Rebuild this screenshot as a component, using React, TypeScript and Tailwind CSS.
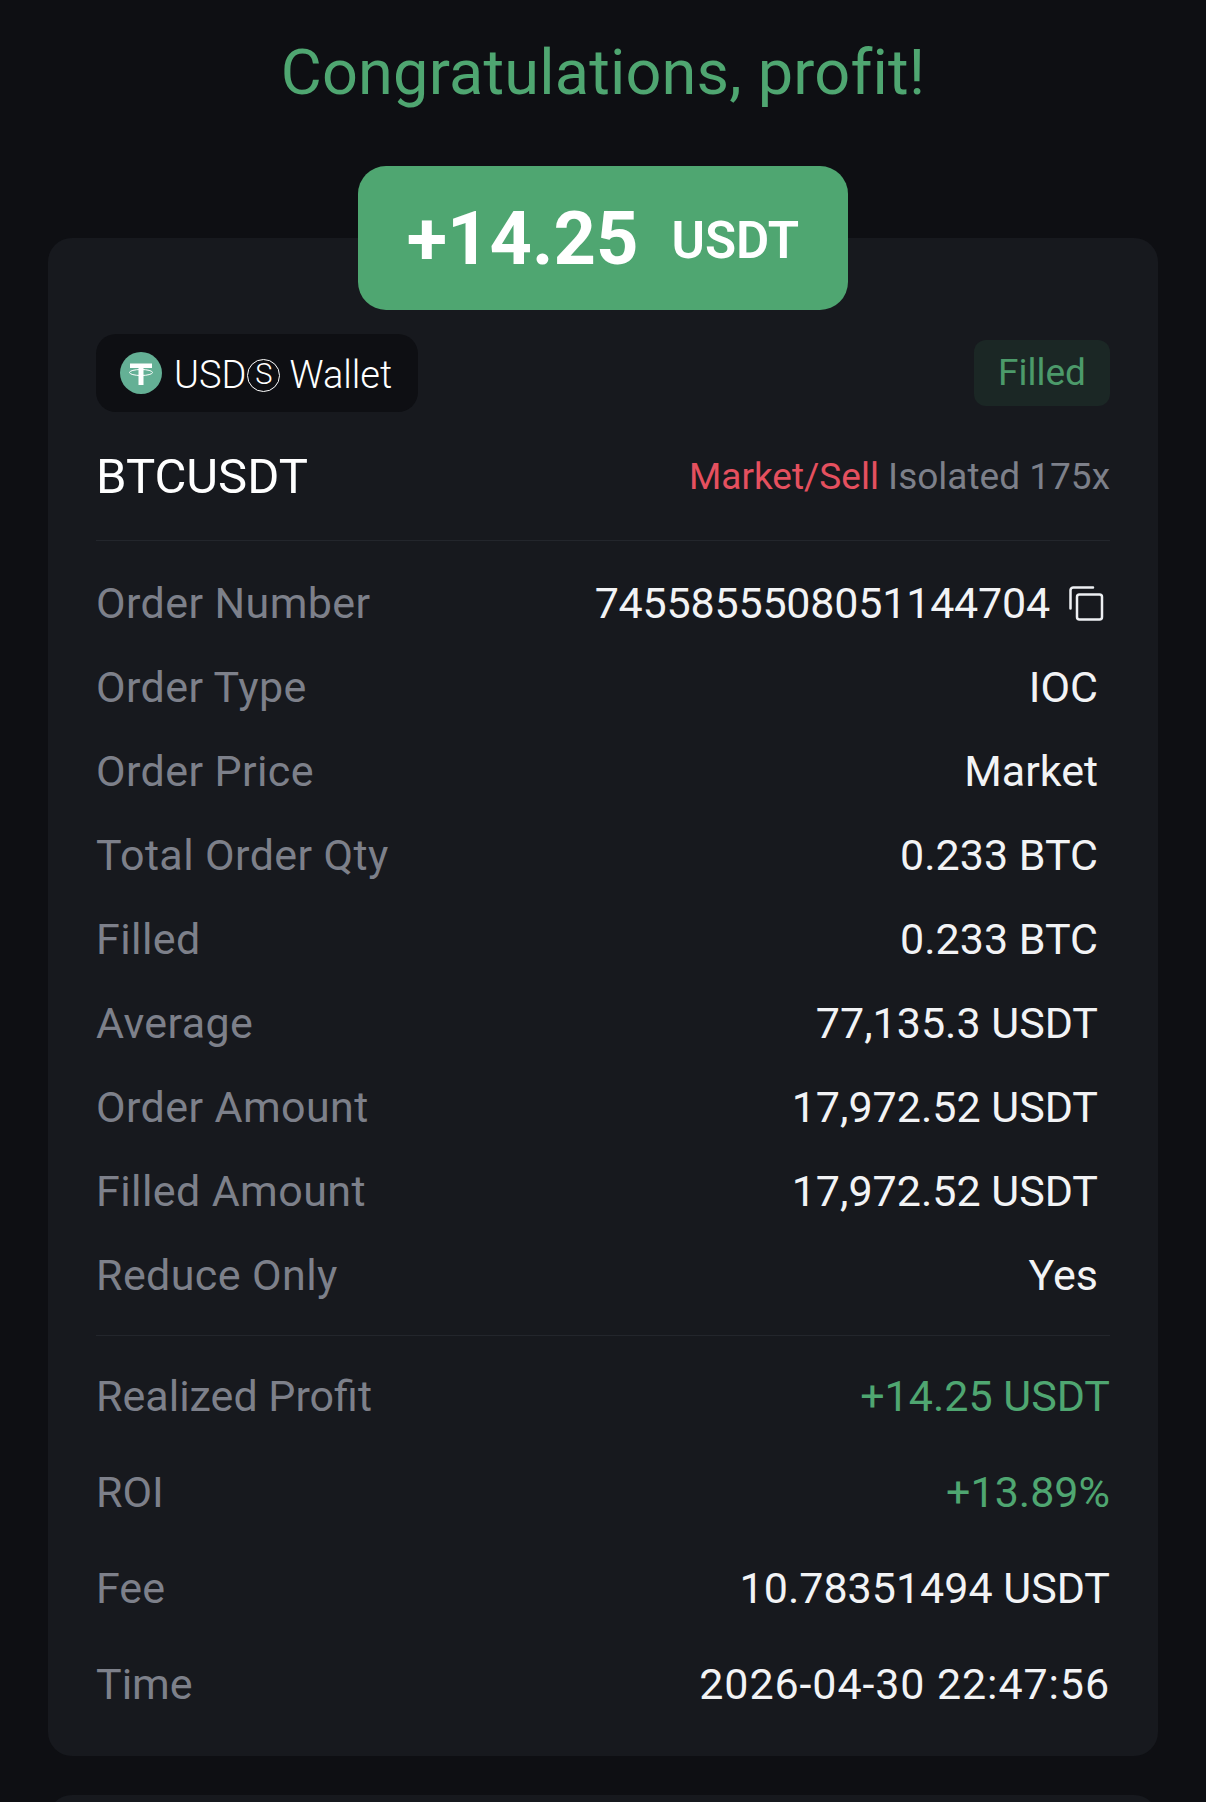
const details = [
  { label: "Order Type", value: "IOC" },
  { label: "Order Price", value: "Market" },
  { label: "Total Order Qty", value: "0.233 BTC" },
  { label: "Filled", value: "0.233 BTC" },
  { label: "Average", value: "77,135.3 USDT" },
  { label: "Order Amount", value: "17,972.52 USDT" },
  { label: "Filled Amount", value: "17,972.52 USDT" },
  { label: "Reduce Only", value: "Yes" },
];

const summary = [
  { label: "Realized Profit", value: "+14.25 USDT", color: "text-[#4fa671]" },
  { label: "ROI", value: "+13.89%", color: "text-[#4fa671]" },
  { label: "Fee", value: "10.78351494 USDT", color: "text-[#f2f3f5]" },
  { label: "Time", value: "2026-04-30 22:47:56", color: "text-[#f2f3f5] tracking-[0.9px]" },
];

function TetherIcon() {
  return (
    <svg width="42" height="42" viewBox="0 0 42 42">
      <circle cx="21" cy="21" r="21" fill="#64b095" />
      <path d="M10 11.500h22v4.500h-8.500v17h-5V16H10z" fill="#fff" />
      <ellipse cx="21" cy="20.500" rx="11.500" ry="3" fill="none" stroke="#fff" strokeWidth="1" />
    </svg>
  );
}

function CopyIcon() {
  return (
    <svg width="36" height="36" viewBox="0 0 36 36" fill="none" stroke="#eef0f3" strokeWidth="2.500">
      <path d="M2.500 23.500V5A3 3 0 0 1 5.500 2.500H25" strokeLinecap="round" />
      <rect x="9" y="9.500" width="25" height="25" rx="2.500" />
    </svg>
  );
}

export default function App() {
  return (
    <div className="h-[1802px] overflow-hidden bg-[#0e0f13] px-[48px] font-['Roboto','Liberation_Sans',sans-serif]">
      <h1 className="pt-[34px] text-center text-[63px] leading-[78px] font-normal tracking-[0.2px] text-[#4fa671]">
        Congratulations, profit!
      </h1>

      <div className="relative z-10 mx-auto mt-[54px] flex h-[144px] w-[490px] items-center justify-center gap-[33px] rounded-[28px] bg-[#4fa671] text-white">
        <span className="text-[74px] font-bold">+14.25</span>
        <span className="mt-[6px] text-[51px] font-semibold">USDT</span>
      </div>

      <div className="-mt-[72px] h-[1518px] rounded-[24px] bg-[#17191e] px-[48px] pt-[96px]">
        <div className="flex items-center justify-between">
          <div className="flex h-[78px] w-[322px] items-center gap-[12px] rounded-[20px] bg-[#0e0f13] pl-[24px] text-[38px] font-light text-white">
            <TetherIcon />
            <span className="mt-[4px] flex items-center">
              USD
              <span className="ml-[1px] flex h-[33px] w-[33px] items-center justify-center rounded-full border border-white text-[29px]">S</span>
              <span className="ml-[9px]">Wallet</span>
            </span>
          </div>
          <div className="flex h-[66px] w-[136px] items-center justify-center rounded-[12px] bg-[#1b2725] text-[37px] text-[#4c9a6a]">
            Filled
          </div>
        </div>

        <div className="mt-[22px] flex h-[107px] items-center justify-between border-b border-[#23262c] pb-[21px]">
          <span className="text-[49px] text-white">BTCUSDT</span>
          <span className="text-[37px] text-[#7d808a]">
            <span className="text-[#e5505f]">Market/Sell</span> Isolated 175x
          </span>
        </div>

        <div className="border-b border-[#23262c] pt-[20px] pb-[18px]">
          <div className="flex h-[84px] items-center justify-between text-[43px]">
            <span className="tracking-[0.4px] text-[#7d808a]">Order Number</span>
            <span className="flex items-center gap-[18px] pr-[6px] tracking-[-0.2px] text-[#f2f3f5]">
              7455855508051144704
              <CopyIcon />
            </span>
          </div>
          {details.map((row) => (
            <div key={row.label} className="flex h-[84px] items-center justify-between pr-[12px] text-[43px]">
              <span className="tracking-[0.4px] text-[#7d808a]">{row.label}</span>
              <span className="text-[#f2f3f5]">{row.value}</span>
            </div>
          ))}
        </div>

        <div className="pt-[12px]">
          {summary.map((row) => (
            <div key={row.label} className="flex h-[96px] items-center justify-between text-[43px]">
              <span className="text-[#7d808a]">{row.label}</span>
              <span className={row.color}>{row.value}</span>
            </div>
          ))}
        </div>
      </div>

      <div className="mt-[39px] h-[40px] rounded-t-[24px] bg-[#17191e]" />
    </div>
  );
}
